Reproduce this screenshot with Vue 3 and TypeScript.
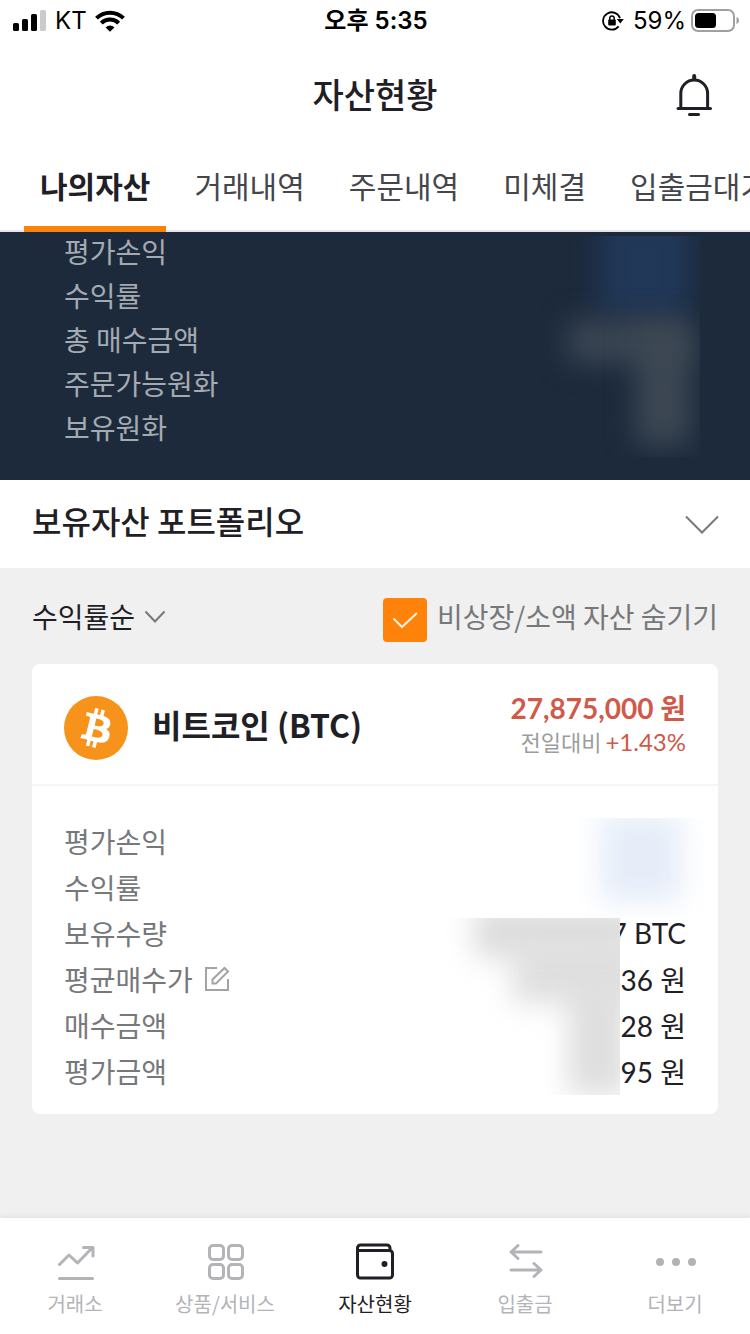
<script setup lang="ts">
import { ref } from 'vue'

interface Row {
  label: string
  value?: string
  editable?: boolean
}

const tabs: string[] = ['나의자산', '거래내역', '주문내역', '미체결', '입출금대기']
const activeTab = ref(0)

const summary: string[] = ['평가손익', '수익률', '총 매수금액', '주문가능원화', '보유원화']

const rows: Row[] = [
  { label: '평가손익' },
  { label: '수익률' },
  { label: '보유수량', value: '7 BTC' },
  { label: '평균매수가', value: '36 원', editable: true },
  { label: '매수금액', value: '28 원' },
  { label: '평가금액', value: '95 원' },
]

const sort = ref('수익률순')
const hideSmall = ref(true)

const navItems = [
  { id: 'exchange', label: '거래소' },
  { id: 'products', label: '상품/서비스' },
  { id: 'assets', label: '자산현황' },
  { id: 'transfer', label: '입출금' },
  { id: 'more', label: '더보기' },
]
const activeNav = ref('assets')
</script>

<template>
  <div class="app">
    <div class="status">
      <div class="status-left">
        <svg width="34" height="22" viewBox="0 0 34 22" aria-hidden="true">
          <rect x="0" y="13" width="6" height="8" rx="1.5" />
          <rect x="9" y="9" width="6" height="12" rx="1.5" />
          <rect x="18" y="4" width="6" height="17" rx="1.5" />
          <rect x="27" y="0" width="6" height="21" rx="1.5" fill="#cbcbcb" />
        </svg>
        <span>KT</span>
        <svg width="30" height="22" viewBox="0 0 30 22" aria-hidden="true">
          <g fill="none" stroke="#000" stroke-width="4">
            <path d="M1.5 8.2a19.2 19.2 0 0 1 27 0" />
            <path d="M6.3 13.1a12.4 12.4 0 0 1 17.4 0" />
          </g>
          <path d="M15 21.8l-4.4-4.4a6.3 6.3 0 0 1 8.8 0z" />
        </svg>
      </div>
      <div class="status-time">오후 5:35</div>
      <div class="status-right">
        <svg width="22" height="20" viewBox="0 0 22 20" aria-hidden="true">
          <path d="M18 7.200A8.700 8.700 0 1 0 16.600 15.400" fill="none" stroke="#000" stroke-width="1.8" />
          <path d="M14.800 8h7l-3.500 4.500z" />
          <rect x="6.200" y="8.600" width="7.600" height="5.800" rx=".8" />
          <path d="M7.800 9V7.200a2.200 2.200 0 0 1 4.400 0V9" fill="none" stroke="#000" stroke-width="1.5" />
        </svg>
        <span>59%</span>
        <svg width="48" height="24" viewBox="0 0 48 24" aria-hidden="true">
          <rect x="1" y="1" width="42" height="21" rx="6" fill="none" stroke="#a0a0a0" stroke-width="2" />
          <rect x="4" y="4" width="21" height="15" rx="3.5" />
          <path d="M45.5 8c2 1 2.500 2 2.500 3.500s-.5 2.500-2.500 3.500z" fill="#a0a0a0" />
        </svg>
      </div>
    </div>

    <header class="header">
      <h1>자산현황</h1>
      <button class="bell" type="button" aria-label="알림">
        <svg width="38" height="44" viewBox="0 0 38 44" fill="none" stroke="#1f2025" stroke-width="3" stroke-linecap="round" aria-hidden="true">
          <path d="M5.8 35V20.500a13.400 13.400 0 0 1 26.800 0V35" />
          <path d="M3 35.500h32.500M14.500 41.500h9" />
          <path d="M19.200 3v3" stroke-width="4" />
        </svg>
      </button>
    </header>

    <nav class="tabs" aria-label="자산 메뉴">
      <button
        v-for="(tab, i) in tabs"
        :key="tab"
        type="button"
        class="tab"
        :class="{ active: i === activeTab }"
        @click="activeTab = i"
      >{{ tab }}</button>
    </nav>

    <section class="summary">
      <div v-for="label in summary" :key="label" class="summary-row">{{ label }}</div>
      <div class="mask mask-dark" aria-hidden="true">
        <i class="fog navy"></i>
        <i class="fog slate-wide"></i>
        <i class="fog slate-tall"></i>
      </div>
    </section>

    <button class="portfolio" type="button">
      <span>보유자산 포트폴리오</span>
      <svg width="34" height="20" viewBox="0 0 34 20" fill="none" stroke="#77787b" stroke-width="2" aria-hidden="true">
        <path d="M1 2.500l16 16 16-16" />
      </svg>
    </button>

    <main class="content">
      <div class="filters">
        <div class="sort">
          <select v-model="sort" aria-label="정렬">
            <option>수익률순</option>
          </select>
          <svg width="22" height="14" viewBox="0 0 22 14" fill="none" stroke="#77787b" stroke-width="2" aria-hidden="true">
            <path d="M1.500 2.500L11 12.500l9.500-10" />
          </svg>
        </div>
        <label class="check">
          <span class="box">
            <input v-model="hideSmall" type="checkbox" />
            <svg v-if="hideSmall" width="26" height="18" viewBox="0 0 26 18" fill="none" stroke="#fff3dc" stroke-width="2" aria-hidden="true">
              <path d="M1.500 7.500l8.500 8.500L25 2" />
            </svg>
          </span>
          <span>비상장/소액 자산 숨기기</span>
        </label>
      </div>

      <article class="card">
        <div class="card-head">
          <svg class="coin" width="64" height="64" viewBox="0 0 32 32" aria-hidden="true">
            <circle cx="16" cy="16" r="16" fill="#f7931a" />
            <path
              fill="#fff"
              d="M23.189 14.02c.314-2.096-1.283-3.223-3.465-3.975l.708-2.84-1.728-.43-.69 2.765c-.454-.114-.92-.22-1.385-.326l.695-2.783L15.596 6l-.708 2.839c-.376-.086-.746-.17-1.104-.26l.002-.009-2.384-.595-.46 1.846s1.283.294 1.256.312c.7.175.826.638.805 1.006l-.806 3.235c.048.012.11.03.18.057l-.183-.045-1.13 4.532c-.086.212-.303.531-.793.41.018.025-1.256-.313-1.256-.313l-.858 1.978 2.25.561c.418.105.828.215 1.231.318l-.715 2.872 1.727.43.708-2.84c.472.127.93.245 1.378.357l-.706 2.828 1.728.43.715-2.866c2.948.558 5.164.333 6.097-2.333.752-2.146-.037-3.385-1.588-4.192 1.13-.26 1.98-1.003 2.207-2.538zm-3.95 5.538c-.533 2.147-4.148.986-5.32.695l.95-3.805c1.172.293 4.929.872 4.37 3.11zm.535-5.569c-.487 1.953-3.495.96-4.47.717l.86-3.45c.975.243 4.118.696 3.61 2.733z"
            />
          </svg>
          <h2>비트코인 (BTC)</h2>
          <div class="quote">
            <strong>27,875,000 원</strong>
            <div class="change"><span>전일대비</span><em>+1.43%</em></div>
          </div>
        </div>
        <div class="card-body">
          <div v-for="row in rows" :key="row.label" class="row">
            <span class="row-label">{{ row.label }}</span>
            <button v-if="row.editable" class="edit" type="button" aria-label="평균매수가 수정">
              <svg width="26" height="26" viewBox="0 0 26 26" fill="none" stroke="#a3a3a3" stroke-width="2" aria-hidden="true">
                <path d="M13 2H2v22h22V13" />
                <path d="M8.500 17.500v-4L20.500 2l3.500 3.500L12 17.500z" />
              </svg>
            </button>
            <span class="row-value">{{ row.value }}</span>
          </div>
          <div class="mask mask-blue" aria-hidden="true"><i class="fog sky"></i></div>
          <div class="mask mask-gray" aria-hidden="true">
            <i class="fog g1"></i>
            <i class="fog g2"></i>
            <i class="fog g3"></i>
          </div>
        </div>
      </article>
    </main>

    <nav class="bottom" aria-label="주 메뉴">
      <button
        v-for="item in navItems"
        :key="item.id"
        type="button"
        class="nav-item"
        :class="{ active: item.id === activeNav }"
        @click="activeNav = item.id"
      >
        <svg width="40" height="40" viewBox="0 0 40 40" fill="none" stroke="currentColor" stroke-width="3" stroke-linecap="round" stroke-linejoin="round" aria-hidden="true">
          <g v-if="item.id === 'exchange'">
            <path d="M4.500 22.500l9.500-9.500 8.500 8L37 6M28.500 5.500H38V14M4.500 36.500h33" />
          </g>
          <g v-else-if="item.id === 'products'">
            <rect x="4.500" y="3.500" width="14" height="14" rx="3.500" />
            <rect x="23.500" y="3.500" width="14" height="14" rx="3.500" />
            <rect x="4.500" y="22.500" width="14" height="14" rx="3.500" />
            <rect x="23.500" y="22.500" width="14" height="14" rx="3.500" />
          </g>
          <g v-else-if="item.id === 'assets'">
            <path d="M35 8.500V6a3 3 0 0 0-3-3H5.500a3 3 0 0 0-3 3v27a3 3 0 0 0 3 3h29a3 3 0 0 0 3-3V11.500a3 3 0 0 0-3-3h-31" />
            <circle cx="29.500" cy="22" r="3" fill="currentColor" stroke="none" />
          </g>
          <g v-else-if="item.id === 'transfer'">
            <path d="M36 10H6M13 3.500L6 10l7 6.500M6 28h30M29 21.500l7 6.500-7 6.500" />
          </g>
          <g v-else fill="currentColor" stroke="none">
            <circle cx="5" cy="20" r="4" />
            <circle cx="21" cy="20" r="4" />
            <circle cx="37" cy="20" r="4" />
          </g>
        </svg>
        <span>{{ item.label }}</span>
      </button>
    </nav>
  </div>
</template>

<style>
body {
  margin: 0;
  background: #f0f0f0;
}
</style>

<style scoped>
.app {
  min-height: 100vh;
  display: flex;
  flex-direction: column;
  background: #f0f0f0;
  color: #1f2025;
  font-family: "Noto Sans CJK KR", sans-serif;
  font-size: 28px;
  overflow-x: hidden;
}
button,
select {
  font: inherit;
  color: inherit;
  background: none;
  border: 0;
  padding: 0;
  margin: 0;
  cursor: pointer;
}
svg {
  display: block;
  flex: none;
}
h1,
h2 {
  margin: 0;
}

.status {
  display: grid;
  grid-template-columns: 1fr auto 1fr;
  align-items: center;
  height: 40px;
  padding: 0 11px 0 13px;
  background: #fff;
  color: #000;
  font-family: Inter, "Noto Sans CJK KR", sans-serif;
  font-size: 24px;
  line-height: 40px;
}
.status-left,
.status-right {
  display: flex;
  align-items: center;
  gap: 8px;
}
.status span,
.status-time {
  padding-top: 1px;
}
.status-right {
  justify-content: flex-end;
  gap: 5px;
}
.status-right span {
  padding-left: 4px;
}
.status-time {
  font-weight: 600;
}

.header {
  display: grid;
  grid-template-columns: 1fr auto 1fr;
  align-items: center;
  height: 112px;
  padding: 0 37px;
  background: #fff;
}
.header h1 {
  grid-column: 2;
  padding-bottom: 4px;
  font-size: 34px;
  font-weight: 500;
  line-height: 48px;
}
.bell {
  justify-self: end;
  padding-bottom: 2px;
}

.tabs {
  display: flex;
  gap: 12px;
  height: 80px;
  padding: 0 24px;
  background: #fff;
  box-shadow: inset 0 -2px #e3e5ea;
  overflow-x: auto;
  scrollbar-width: none;
}
.tab {
  flex: none;
  padding: 0 16px 8px;
  border-bottom: 6px solid transparent;
  font-size: 30px;
  line-height: 44px;
  color: #45464b;
}
.tab.active {
  border-color: #f7820e;
  color: #1f2025;
  font-weight: 700;
}

.summary {
  position: relative;
  display: flex;
  flex-direction: column;
  gap: 6px;
  padding: 0 64px 34px;
  background: #1c2a3c;
  color: #a4aab1;
}
.summary-row {
  line-height: 38px;
}

.mask {
  position: absolute;
  overflow: hidden;
}
.fog {
  position: absolute;
  filter: blur(14px);
}
.mask-dark {
  top: 4px;
  right: 50px;
  width: 160px;
  height: 221px;
}
.navy {
  inset: -20px 10px 140px 60px;
  background: #213859;
}
.slate-wide {
  inset: 84px 10px 94px 28px;
  background: #3b4654;
}
.slate-tall {
  inset: 90px 10px 12px 96px;
  background: #3d4854;
}

.portfolio {
  display: flex;
  align-items: center;
  justify-content: space-between;
  height: 88px;
  padding: 0 31px 0 32px;
  background: #fff;
  font-size: 32px;
  font-weight: 500;
}
.portfolio span {
  padding-bottom: 8px;
}

.content {
  padding: 0 32px 32px;
}
.filters {
  display: flex;
  align-items: center;
  justify-content: space-between;
  height: 96px;
  line-height: 40px;
}
.sort,
.box {
  display: grid;
  align-items: center;
}
.sort > *,
.box > * {
  grid-area: 1 / 1;
}
.sort select {
  appearance: none;
  padding-right: 30px;
  line-height: 40px;
}
.sort svg {
  justify-self: end;
  pointer-events: none;
}
.check {
  display: flex;
  align-items: center;
  gap: 10px;
  color: #77787b;
}
.box {
  justify-items: center;
  padding-top: 8px;
}
.box input {
  appearance: none;
  width: 44px;
  height: 44px;
  margin: 0;
  border: 2px solid #ff830a;
  border-radius: 4px;
  background: #fff;
}
.box input:checked {
  background: #ff830a;
}
.box svg {
  pointer-events: none;
}

.card {
  background: #fff;
  border-radius: 8px;
}
.card-head {
  display: flex;
  align-items: center;
  height: 120px;
  padding: 0 32px;
  border-bottom: 2px solid #f5f5f5;
}
.coin {
  margin: 8px 24px 0 0;
}
.card-head h2 {
  font-size: 32px;
  font-weight: 700;
  line-height: 40px;
}
.quote,
.row-value {
  margin-left: auto;
  font-family: Lato, "Noto Sans CJK KR", sans-serif;
}
.quote {
  padding-top: 2px;
  text-align: right;
  color: #d0594a;
}
.quote strong {
  display: block;
  line-height: 34px;
}
.change {
  display: flex;
  align-items: baseline;
  justify-content: flex-end;
  gap: 4px;
  font-size: 24px;
  line-height: 34px;
}
.change span {
  font-size: 22px;
  color: #9c9c9c;
}
.change em {
  font-style: normal;
}
.card-body {
  position: relative;
  padding: 32px 32px 20px;
}
.row {
  display: flex;
  align-items: center;
  height: 46px;
}
.row-label {
  color: #77787b;
}
.edit {
  margin-left: 11px;
}
.mask-blue {
  top: 32px;
  right: 12px;
  width: 140px;
  height: 100px;
}
.sky {
  inset: -4px 24px 16px 34px;
  background: #e6edf9;
}
.mask-gray {
  top: 132px;
  right: 98px;
  width: 176px;
  height: 177px;
  background: #fff;
}
.g1 {
  inset: -10px -20px 138px 30px;
  background: #dcdcdc;
}
.g2 {
  inset: 20px -20px 92px 68px;
  background: #dfdfdf;
}
.g3 {
  inset: 60px -8px 0 124px;
  background: #dedede;
}

.bottom {
  display: grid;
  grid-template-columns: repeat(5, 1fr);
  height: 116px;
  margin-top: auto;
  background: #fff;
  box-shadow: 0 -1px 6px rgba(0, 0, 0, 0.08);
}
.nav-item {
  display: flex;
  flex-direction: column;
  align-items: center;
  justify-content: center;
  gap: 8px;
  padding-top: 8px;
  font-size: 20px;
  line-height: 28px;
  color: #b3b4b8;
}
.nav-item svg {
  overflow: visible;
}
.nav-item.active {
  color: #1f2025;
}
</style>
